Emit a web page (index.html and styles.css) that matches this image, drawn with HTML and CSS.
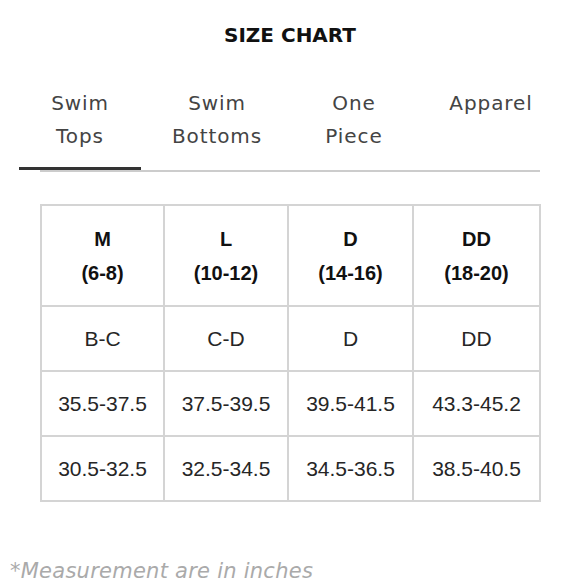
FILE: index.html
```html
<!DOCTYPE html>
<html lang="en">
<head>
<meta charset="utf-8">
<title>Size Chart</title>
<link rel="stylesheet" href="styles.css">
</head>
<body>
<div class="page">
  <h1 class="title">SIZE CHART</h1>
  <nav class="tabs">
    <div class="tab active">Swim<br>Tops</div>
    <div class="tab">Swim<br>Bottoms</div>
    <div class="tab">One<br>Piece</div>
    <div class="tab">Apparel</div>
  </nav>
  <div class="tab-rule"></div>
  <table class="chart">
    <colgroup>
      <col class="c1"><col class="c2"><col class="c3"><col class="c4">
    </colgroup>
    <thead>
      <tr>
        <th>M<br>(6-8)</th>
        <th>L<br>(10-12)</th>
        <th>D<br>(14-16)</th>
        <th>DD<br>(18-20)</th>
      </tr>
    </thead>
    <tbody>
      <tr><td>B-C</td><td>C-D</td><td>D</td><td>DD</td></tr>
      <tr><td>35.5-37.5</td><td>37.5-39.5</td><td>39.5-41.5</td><td>43.3-45.2</td></tr>
      <tr><td>30.5-32.5</td><td>32.5-34.5</td><td>34.5-36.5</td><td>38.5-40.5</td></tr>
    </tbody>
  </table>
  <p class="note">*Measurement are in inches</p>
</div>
</body>
</html>
```
FILE: styles.css
```css
html, body {
  margin: 0;
  padding: 0;
  background: #ffffff;
}
.page {
  width: 580px;
  height: 580px;
  overflow: hidden;
  font-family: "DejaVu Sans", sans-serif;
}
.title {
  margin: 0;
  padding-top: 23px;
  font-size: 20px;
  line-height: 24px;
  font-weight: bold;
  text-align: center;
  color: #111111;
}
.tabs {
  display: flex;
  gap: 15px;
  margin: 40px 0 0 19px;
}
.tab {
  width: 122px;
  text-align: center;
  font-size: 20px;
  line-height: 33px;
  letter-spacing: 0.9px;
  color: #444444;
  padding-bottom: 14px;
  border-bottom: 3px solid transparent;
}
.tab.active {
  border-bottom-color: #333333;
}
.tab-rule {
  margin: 0 40px;
  height: 2px;
  background: #cccccc;
}
.chart {
  margin: 32px 0 0 40px;
  border-collapse: collapse;
  table-layout: fixed;
  width: 499px;
  font-family: "Liberation Sans", Arial, sans-serif;
}
.c1 { width: 123px; }
.c2 { width: 124px; }
.c3 { width: 125px; }
.c4 { width: 127px; }
.chart th,
.chart td {
  border: 2px solid #d4d4d4;
  text-align: center;
  vertical-align: middle;
  padding: 0;
}
.chart th {
  height: 99px;
  font-size: 20px;
  line-height: 34px;
  font-weight: bold;
  color: #111111;
}
.chart td {
  height: 63px;
  font-size: 21px;
  color: #262626;
}
.note {
  margin: 57px 0 0 10px;
  font-size: 21px;
  line-height: 24px;
  font-style: italic;
  letter-spacing: 0.25px;
  color: #aaaaaa;
}
```
